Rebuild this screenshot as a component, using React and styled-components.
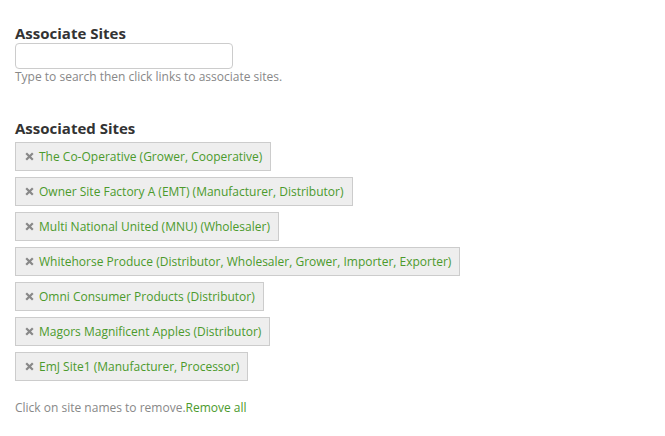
import React from 'react';
import styled, { createGlobalStyle } from 'styled-components';

const GlobalStyle = createGlobalStyle`
    body {
        margin: 0;
        background: #fff;
        font-family: "Open Sans", "Liberation Sans", sans-serif;
        color: #333;
    }
`;

const Page = styled.div`
    padding: 23px 15px 0 15px;
`;

const Section = styled.section`
    margin-bottom: ${props => props.gap || 0}px;
`;

const Heading = styled.h3`
    margin: 0 0 ${props => props.space || 0}px 0;
    font-size: 15px;
    line-height: 20px;
    font-weight: 700;
    color: #333;
`;

const SearchInput = styled.input`
    display: block;
    box-sizing: border-box;
    width: 218px;
    height: 26px;
    border: 1px solid #ccc;
    border-radius: 4px;
    padding: 4px 6px;
    font-family: inherit;
    font-size: 12px;
    outline: none;
`;

const Help = styled.p`
    margin: -1px 0 0 0;
    font-size: 12px;
    line-height: 17px;
    color: #888;
`;

const TagList = styled.ul`
    list-style: none;
    margin: 0;
    padding: 0;
    display: flex;
    flex-direction: column;
    align-items: flex-start;
    gap: 6px;
`;

const Tag = styled.li`
    display: flex;
    align-items: center;
    gap: 5px;
    box-sizing: border-box;
    height: 29px;
    padding: 0 8px 0 9px;
    background: #eee;
    border: 1px solid #ccc;
    cursor: pointer;
`;

const TagLink = styled.a`
    color: #4b9a2c;
    font-size: 12px;
    line-height: 17px;
    text-decoration: none;
`;

const Footer = styled.p`
    margin: 18px 0 0 0;
    font-size: 12px;
    line-height: 17px;
    color: #888;
`;

const RemoveAll = styled.a`
    color: #4b9a2c;
    text-decoration: none;
`;

const CloseIcon = () => (
    <svg width="9" height="9" viewBox="0 0 9 9" aria-hidden="true">
        <path d="M1.2 1.2 L7.8 7.8 M7.8 1.2 L1.2 7.8" stroke="#888" strokeWidth="2.2" strokeLinecap="butt" />
    </svg>
);

const sites = [
    'The Co-Operative (Grower, Cooperative)',
    'Owner Site Factory A (EMT) (Manufacturer, Distributor)',
    'Multi National United (MNU) (Wholesaler)',
    'Whitehorse Produce (Distributor, Wholesaler, Grower, Importer, Exporter)',
    'Omni Consumer Products (Distributor)',
    'Magors Magnificent Apples (Distributor)',
    'EmJ Site1 (Manufacturer, Processor)',
];

const App = () => (
    <Page>
        <GlobalStyle />
        <Section gap={33}>
            <Heading>Associate Sites</Heading>
            <SearchInput type="text" />
            <Help>Type to search then click links to associate sites.</Help>
        </Section>
        <Section>
            <Heading space={4}>Associated Sites</Heading>
            <TagList>
                {sites.map((site, index) => (
                    <Tag key={`site-${index}`}>
                        <CloseIcon />
                        <TagLink href="#">{site}</TagLink>
                    </Tag>
                ))}
            </TagList>
            <Footer>
                Click on site names to remove.<RemoveAll href="#">Remove all</RemoveAll>
            </Footer>
        </Section>
    </Page>
);

export default App;
